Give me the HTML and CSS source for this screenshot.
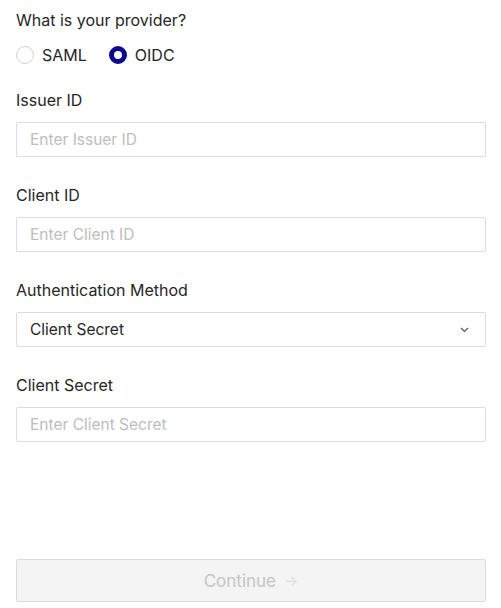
FILE: index.html
```html
<!DOCTYPE html>
<html lang="en">
<head>
<meta charset="utf-8">
<link rel="stylesheet" href="styles.css">
</head>
<body>
<form class="form">
  <div class="question">What is your provider?</div>
  <div class="radios">
    <label class="radio"><span class="dot"></span><span>SAML</span></label>
    <label class="radio"><span class="dot checked"></span><span>OIDC</span></label>
  </div>

  <div class="field">
    <div class="label">Issuer ID</div>
    <div class="input placeholder">Enter Issuer ID</div>
  </div>
  <div class="field">
    <div class="label">Client ID</div>
    <div class="input placeholder">Enter Client ID</div>
  </div>
  <div class="field">
    <div class="label">Authentication Method</div>
    <div class="input select">
      <span>Client Secret</span>
      <svg class="chev" width="9" height="6" viewBox="0 0 9 6"><path d="M1 1l3.5 3.5L8 1" fill="none" stroke="#555" stroke-width="1.2"/></svg>
    </div>
  </div>
  <div class="field">
    <div class="label">Client Secret</div>
    <div class="input placeholder">Enter Client Secret</div>
  </div>

  <div class="button">Continue <span class="arrow">→</span></div>
</form>
</body>
</html>
```
FILE: styles.css
```css
html, body {
  margin: 0;
  padding: 0;
  background: #fff;
}
body {
  font-family: Inter, "Noto Sans", sans-serif;
  color: #262626;
  font-size: 16px;
}
.form {
  padding: 8px 15px 0 16px;
  display: flex;
  flex-direction: column;
}
.question {
  line-height: 24px;
}
.radios {
  display: flex;
  gap: 22px;
  margin-top: 14px;
  height: 18px;
  align-items: center;
}
.radio {
  display: flex;
  align-items: center;
  gap: 8px;
  line-height: 18px;
}
.dot {
  width: 18px;
  height: 18px;
  box-sizing: border-box;
  border-radius: 50%;
  border: 1px solid #d0d0d0;
  background: #fff;
}
.dot.checked {
  border: 5px solid #0b0b8c;
}
.field {
  margin-top: 26px;
  display: flex;
  flex-direction: column;
}
.radios + .field {
  margin-top: 24px;
}
.label {
  line-height: 24px;
  margin-bottom: 10px;
}
.input {
  height: 35px;
  box-sizing: border-box;
  border: 1px solid #dcdcdc;
  border-radius: 2px;
  padding: 0 13px;
  display: flex;
  align-items: center;
  font-size: 15.5px;
}
.placeholder {
  color: #bdbdbd;
}
.select {
  justify-content: space-between;
  color: #262626;
  padding-right: 16px;
}
.button {
  margin-top: 117px;
  height: 43px;
  box-sizing: border-box;
  border: 1px solid #dcdcdc;
  border-radius: 2px;
  background: #f4f4f4;
  color: #c4c4c4;
  display: flex;
  align-items: center;
  justify-content: center;
  gap: 8px;
  font-size: 17px;
}
.arrow {
  color: #e0e0e0;
  font-size: 15px;
}
```
